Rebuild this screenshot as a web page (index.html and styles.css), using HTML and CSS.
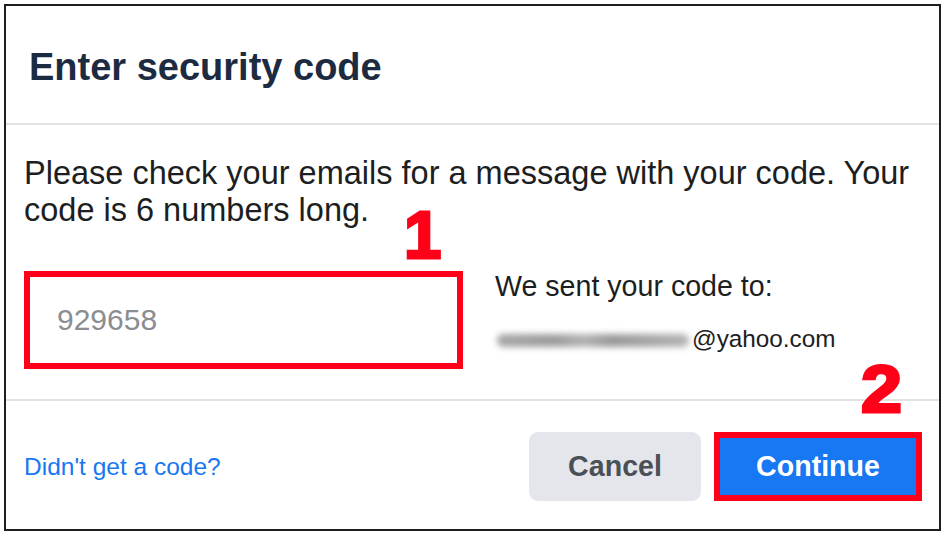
FILE: index.html
```html
<!DOCTYPE html>
<html lang="en">
<head>
<meta charset="utf-8">
<title>Enter security code</title>
<link rel="stylesheet" href="styles.css">
</head>
<body>
<div class="frame">
  <header class="header">
    <h1 class="title">Enter security code</h1>
  </header>
  <section class="content">
    <p class="message">Please check your emails for a message with your code. Your code is 6 numbers long.</p>
    <div class="row">
      <div class="code-input">929658</div>
      <div class="sent">
        <div class="sent-label">We sent your code to:</div>
        <div class="sent-email"><span class="blurred"></span>@yahoo.com</div>
      </div>
    </div>
  </section>
  <footer class="footer">
    <a class="link" href="#">Didn't get a code?</a>
    <div class="actions">
      <button class="btn btn-cancel">Cancel</button>
      <button class="btn btn-continue">Continue</button>
    </div>
  </footer>
  <span class="step step-1">1</span>
  <span class="step step-2">2</span>
</div>
</body>
</html>
```
FILE: styles.css
```css
* { box-sizing: border-box; }
html, body { margin: 0; padding: 0; background: #ffffff; }
body { font-family: "Liberation Sans", Arial, sans-serif; }

.frame {
  position: relative;
  margin: 4px 0 0 4px;
  width: 937px;
  height: 527px;
  border: 2px solid #1e1e1e;
  background: #ffffff;
  display: flex;
  flex-direction: column;
}

.header {
  height: 119px;
  border-bottom: 2px solid #e3e3e3;
  display: flex;
  align-items: center;
  padding: 4px 0 0 23px;
}
.title {
  margin: 0;
  font-size: 38px;
  line-height: 1;
  font-weight: 700;
  color: #1c2b41;
}

.content {
  padding: 30px 18px 30px 18px;
  border-bottom: 2px solid #e3e3e3;
}
.message {
  margin: 0;
  font-size: 32.5px;
  line-height: 37px;
  color: #1c1e21;
  width: 900px;
}
.row {
  margin-top: 42px;
  display: flex;
  gap: 32px;
}
.code-input {
  width: 439px;
  height: 98px;
  border: 6px solid #ff0019;
  padding-left: 27px;
  display: flex;
  align-items: center;
  font-size: 30px;
  color: #8a8d91;
}
.sent {
  color: #1c1e21;
  font-size: 28.6px;
  line-height: 30px;
}
.sent-email {
  margin-top: 23px;
  display: flex;
  align-items: center;
  font-size: 24.3px;
}
.blurred {
  display: inline-block;
  width: 192px;
  height: 13px;
  margin: 3px 3px 0 2px;
  border-radius: 6px;
  background: linear-gradient(90deg, #a8a8a8 0%, #9c9c9c 30%, #b2b2b2 45%, #999 60%, #a6a6a6 80%, #b4b4b4 100%);
  filter: blur(3px);
}

.footer {
  flex: 1;
  display: flex;
  align-items: center;
  justify-content: space-between;
  padding: 3px 17px 0 18px;
}
.link {
  color: #1877f2;
  text-decoration: none;
  font-size: 24.5px;
}
.actions {
  display: flex;
  gap: 13px;
}
.btn {
  font-family: "Liberation Sans", Arial, sans-serif;
  font-weight: 700;
  font-size: 28.6px;
  height: 69px;
  border-radius: 9px;
  border: 0;
  padding: 0;
}
.btn-cancel {
  width: 172px;
  background: #e4e6eb;
  color: #4b4f56;
}
.btn-continue {
  width: 208px;
  background: #1877f2;
  color: #ffffff;
  border: 6px solid #ff0019;
  border-radius: 0;
}

.step {
  position: absolute;
  font-size: 67px;
  line-height: 50px;
  font-weight: 700;
  color: #ff0019;
  -webkit-text-stroke: 3px #ff0019;
}
.step-1 { left: 398px; top: 204px; }
.step-2 { left: 855px; top: 358px; transform: scaleX(1.1); transform-origin: left top; }
```
